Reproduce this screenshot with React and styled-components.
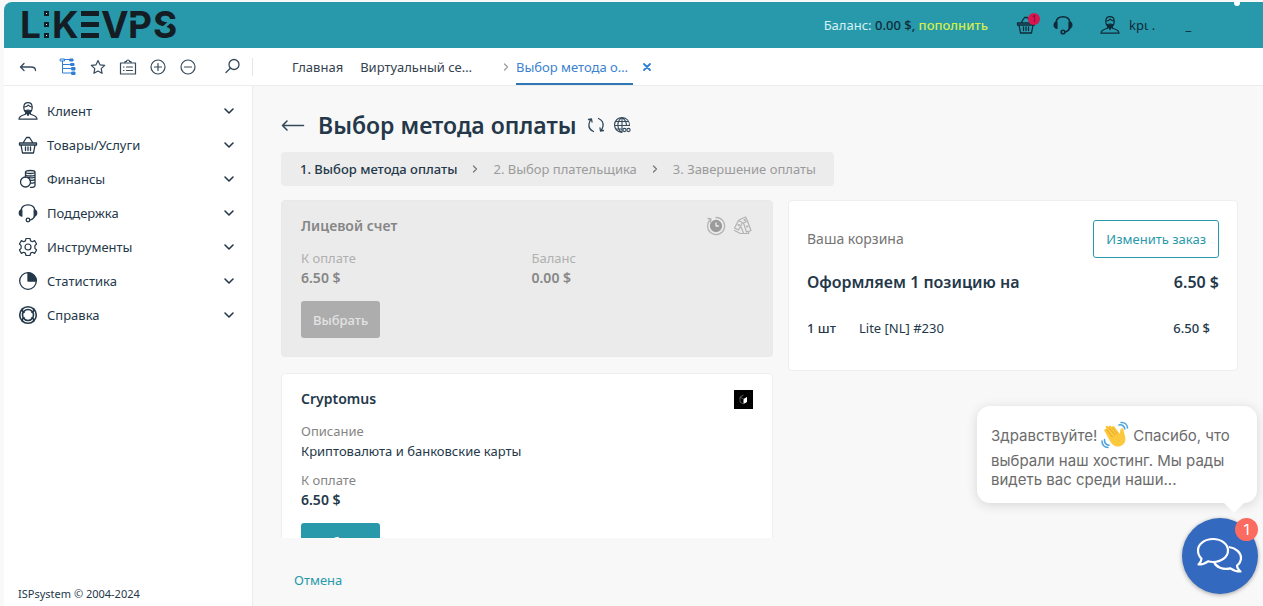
import React from "react";
import styled, { createGlobalStyle } from "styled-components";

const GlobalStyle = createGlobalStyle`
  * { box-sizing: border-box; }
  html, body { margin: 0; padding: 0; }
  body {
    background: #f8f8f8;
    color: #24384a;
    font-family: "Noto Sans", "Open Sans", sans-serif;
    font-size: 13px;
    line-height: 20px;
  }
  button { font: inherit; cursor: pointer; }
  a { text-decoration: none; }
  ul, ol, dl, dd, h1, h2, p { margin: 0; padding: 0; }
  ul, ol { list-style: none; }
`;

const teal = "#2899ab";

const Page = styled.div`
  position: relative;
  display: flex;
  flex-direction: column;
  height: 100vh;
  min-height: 560px;
  padding: 2px 0 0 4px;
  overflow: hidden;
`;

const Header = styled.header`
  flex: none;
  display: flex;
  align-items: center;
  height: 46px;
  padding: 0 73px 0 17px;
  background: ${teal};
  border-top-left-radius: 8px;
`;

const Logo = styled.a`
  display: flex;
  margin-right: auto;
  color: #151d24;
`;

const Balance = styled.p`
  margin-right: 28px;
  color: #d5f1f5;
`;

const BalanceSum = styled.strong`
  color: #0f2a38;
  font-weight: 500;
`;

const TopUp = styled.a`
  color: #d3ee4c;
  font-weight: 500;
`;

const HeaderButton = styled.button`
  position: relative;
  display: flex;
  align-items: center;
  gap: 9px;
  margin-right: ${(p) => p.$gap || 0}px;
  padding: 0;
  border: 0;
  background: none;
  color: #0f2a38;
`;

const CartCount = styled.span`
  position: absolute;
  top: -2px;
  right: -4px;
  width: 12px;
  height: 12px;
  border-radius: 50%;
  background: #d8164f;
  color: #6d0d2d;
  font-size: 9px;
  line-height: 12px;
  text-align: center;
`;

const UserName = styled.span`
  width: 61px;
  text-align: left;
  white-space: pre;
`;

const WindowMark = styled.span`
  position: absolute;
  top: 0;
  right: 23px;
  width: 6px;
  height: 6px;
  border-radius: 0 0 3px 3px;
  background: #fff;
`;

const Bar = styled.div`
  flex: none;
  display: flex;
  align-items: center;
  height: 38px;
  background: #fff;
  border-bottom: 1px solid #ececec;
`;

const Tools = styled.div`
  flex: none;
  display: flex;
  align-items: center;
  gap: 12px;
  width: 249px;
  height: 18px;
  padding: 0 11px 0 15px;
  border-right: 1px solid #e6e6e6;
`;

const IconButton = styled.button`
  display: flex;
  padding: 0;
  border: 0;
  background: none;
  color: ${(p) => (p.$active ? "#2f7fd6" : "#34495a")};
  margin-right: ${(p) => (p.$wide ? 10 : 0)}px;
  margin-left: ${(p) => (p.$last ? "auto" : 0)};
`;

const Tabs = styled.nav`
  display: flex;
  align-items: center;
  align-self: stretch;
  padding-left: 39px;
`;

const Tab = styled.a`
  display: flex;
  align-items: center;
  align-self: stretch;
  margin-right: ${(p) => p.$gap}px;
  padding-right: ${(p) => (p.$active ? 5 : 0)}px;
  border-bottom: 2px solid ${(p) => (p.$active ? "#2f76b5" : "transparent")};
  border-top: 2px solid transparent;
  color: ${(p) => (p.$active ? "#3b82cf" : "#34424f")};
`;

const TabArrow = styled.span`
  display: flex;
  margin-right: 6px;
  color: #9a9a9a;
`;

const Body = styled.div`
  flex: 1;
  display: flex;
  min-height: 0;
`;

const Sidebar = styled.aside`
  flex: none;
  display: flex;
  flex-direction: column;
  width: 249px;
  padding: 8px 14px 0 14px;
  background: #fff;
  border-right: 1px solid #ececec;
`;

const MenuButton = styled.button`
  display: flex;
  align-items: center;
  gap: 9px;
  width: 100%;
  height: 34px;
  padding: 0 3px 0 0;
  border: 0;
  background: none;
  color: #24384a;
  text-align: left;
`;

const MenuLabel = styled.span`
  flex: 1;
`;

const Copyright = styled.p`
  margin-top: auto;
  padding-bottom: 3px;
  font-size: 11px;
  line-height: 18px;
`;

const Main = styled.main`
  flex: 1;
  display: flex;
  flex-direction: column;
  min-width: 0;
  padding: 0 25px 0 28px;
`;

const TitleRow = styled.div`
  display: flex;
  align-items: center;
  gap: 8px;
  height: 66px;
  padding-top: 12px;
  color: #24384a;
`;

const Title = styled.h1`
  margin: 0 2px 0 5px;
  font-size: 23px;
  font-weight: 600;
  line-height: 32px;
`;

const Steps = styled.ol`
  flex: none;
  display: flex;
  align-items: center;
  align-self: flex-start;
  gap: 14px;
  height: 34px;
  padding: 0 18px 0 19px;
  border-radius: 4px;
  background: #ececec;
`;

const Step = styled.li`
  display: flex;
  align-items: center;
  gap: 14px;
  color: ${(p) => (p.$current ? "#24384a" : "#9b9b9b")};
  font-weight: ${(p) => (p.$current ? 500 : 400)};

  svg { color: #777; }
`;

const Scroll = styled.div`
  flex: 1;
  display: grid;
  grid-template-columns: 492fr 450fr;
  align-items: start;
  gap: 15px;
  min-height: 0;
  margin-top: 14px;
  overflow: hidden;
`;

const Methods = styled.div`
  display: flex;
  flex-direction: column;
  gap: 16px;
`;

const Card = styled.section`
  padding: 15px 19px 18px;
  border: 1px solid ${(p) => (p.$disabled ? "#e9e9e9" : "#eeeeee")};
  border-radius: 4px;
  background: ${(p) => (p.$disabled ? "#ebebeb" : "#fff")};
  color: ${(p) => (p.$disabled ? "#868686" : "#24384a")};
`;

const CardHead = styled.div`
  display: flex;
  align-items: center;
  justify-content: space-between;
  height: 20px;
  margin-bottom: 12px;
`;

const CardTitle = styled.h2`
  font-size: 14px;
  font-weight: 600;
  line-height: 20px;
`;

const CardIcons = styled.span`
  display: flex;
  gap: 7px;
  color: #b3b3b3;
`;

const Fields = styled.dl`
  display: grid;
  grid-template-columns: ${(p) => (p.$two ? "1fr 1fr" : "1fr")};
  gap: 9px;
  margin-bottom: 13px;
`;

const FieldName = styled.dt`
  color: ${(p) => (p.$disabled ? "#b0b0b0" : "#858585")};
`;

const FieldValue = styled.dd`
  font-size: ${(p) => (p.$sum ? 14 : 13)}px;
  font-weight: ${(p) => (p.$sum ? 600 : 400)};
`;

const SelectButton = styled.button`
  height: 37px;
  padding: 0 12px;
  border: 0;
  border-radius: 3px;
  background: ${teal};
  color: #fff;
  font-weight: 500;

  &:disabled {
    background: #adadad;
    color: #e3e3e3;
    cursor: default;
  }
`;

const Cart = styled.section`
  min-height: 171px;
  padding: 19px 18px 20px 18px;
  border: 1px solid #eeeeee;
  border-radius: 4px;
  background: #fff;
`;

const CartRow = styled.div`
  display: flex;
  align-items: center;
  justify-content: space-between;
`;

const CartName = styled.h2`
  color: #757575;
  font-size: 14px;
  font-weight: 400;
`;

const ChangeButton = styled.button`
  height: 38px;
  padding: 0 12px;
  border: 1px solid ${teal};
  border-radius: 3px;
  background: #fff;
  color: ${teal};
`;

const CartTotal = styled(CartRow)`
  margin: 12px 0 22px;
  font-size: 16px;
  font-weight: 600;
  line-height: 24px;
`;

const Items = styled.table`
  width: 100%;
  border-collapse: collapse;

  td { padding: 0; height: 24px; }
  td:first-child { width: 52px; font-weight: 500; }
  td:last-child { padding-right: 9px; text-align: right; font-weight: 500; }
`;

const Footer = styled.footer`
  flex: none;
  height: 68px;
  padding: 32px 13px 0;
`;

const Cancel = styled.a`
  color: ${teal};
`;

const Bubble = styled.div`
  position: absolute;
  right: 6px;
  bottom: 103px;
  width: 280px;
  padding: 13px 0 14px 14px;
  border-radius: 13px;
  background: #fff;
  box-shadow: 0 2px 12px rgba(0, 0, 0, 0.14);
  color: #6b6b6b;
  font-family: Inter, "Noto Sans", sans-serif;
  font-size: 15px;
  line-height: 19px;

  &::after {
    content: "";
    position: absolute;
    right: 12px;
    bottom: -10px;
    border: 11px solid transparent;
    border-top-color: #fff;
    border-bottom: 0;
  }
`;

const BubbleLine = styled.p`
  display: flex;
  align-items: center;
  gap: 4px;
  min-height: ${(p) => (p.$tall ? 32 : 19)}px;
`;

const ChatButton = styled.button`
  position: absolute;
  right: 5px;
  bottom: 12px;
  display: flex;
  align-items: center;
  justify-content: center;
  width: 76px;
  height: 76px;
  padding: 0;
  border: 0;
  border-radius: 50%;
  background: #3369bf;
  box-shadow: 0 1px 4px rgba(0, 0, 0, 0.35);
  color: #fff;
`;

const ChatCount = styled.span`
  position: absolute;
  top: 0;
  right: 0;
  width: 23px;
  height: 23px;
  border-radius: 50%;
  background: #fb6b60;
  color: #fff;
  font-family: Inter, sans-serif;
  font-size: 15px;
  line-height: 23px;
`;

const Svg = ({ size = 20, box = 20, children, width = 1.3 }) => (
  <svg
    width={size}
    height={size}
    viewBox={`0 0 ${box} ${box}`}
    fill="none"
    stroke="currentColor"
    strokeWidth={width}
    strokeLinecap="round"
    strokeLinejoin="round"
    aria-hidden="true"
  >
    {children}
  </svg>
);

const UserIcon = () => (
  <Svg width={1.2}>
    <path d="M5.800 6.500C5.800 3.500 7.300 1.700 10 1.700s4.200 1.800 4.200 4.800c0 3-1.800 5.700-4.200 5.700s-4.200-2.700-4.200-5.700z" />
    <path d="M6.200 6c2 0 3.300-.8 4-1.800.8 1 2 1.600 3.600 1.800M7.500 11.800v1.500c-3 1-6.500 1.400-6.500 4.900h18c0-3.500-3.500-3.900-6.500-4.900v-1.500" />
    <path d="M7 9.800 10 14.500l3-4.700c-1.500-.8-4.500-.8-6 0z" fill="currentColor" />
  </Svg>
);

const BasketIcon = () => (
  <Svg>
    <path d="M1.500 8h17v2h-17zM3 10l1.500 8h11L17 10M5 8l3.500-5.500h3L15 8M7.500 12v3.500M10 12v3.500M12.500 12v3.500" />
  </Svg>
);

const CoinsIcon = () => (
  <Svg>
    <circle cx="7.500" cy="13" r="5" />
    <path d="M7.500 8V3c0-2 9.500-2 9.500 0v13.500c0 1.300-2 1.900-4.500 1.900M7.500 3c0 2 9.500 2 9.500 0M7.500 5.500c0 2 9.500 2 9.500 0M9.500 8.400c3 .8 7.500.5 7.500-.8M12 11.300c2.500.2 5-.2 5-1.300M12.500 14.200c2.500.1 4.500-.4 4.500-1.400" />
  </Svg>
);

const HeadsetIcon = ({ width = 1.3 }) => (
  <Svg width={width}>
    <path d="M3 7.500C3.500 4 6.300 1.800 10 1.800S16.500 4 17 7.500M17 12.500c-.8 2.300-2.400 3.800-4.800 4.500" />
    <path d="M3.800 7v6.200C2.200 12.900 1.300 11.700 1.300 10.100S2.200 7.300 3.800 7zM16.200 7v6.200c1.600-.3 2.500-1.500 2.500-3.100s-.9-2.800-2.500-3.100z" fill="currentColor" />
    <circle cx="10" cy="17" r="1.800" />
  </Svg>
);

const GearIcon = () => (
  <Svg width={1.200}>
    <path d="M8 1.500h4l.6 2.400 1.700.8 2.300-1.100 2 3.400-1.700 1.700v2.600l1.700 1.700-2 3.400-2.300-1.100-1.700.8-.6 2.400H8l-.6-2.400-1.700-.8-2.300 1.100-2-3.400 1.700-1.700V8.700L1.400 7l2-3.400 2.300 1.100 1.700-.8z" />
    <circle cx="10" cy="10" r="3" />
  </Svg>
);

const PieIcon = () => (
  <Svg>
    <circle cx="10" cy="10" r="8.300" />
    <path d="M10 1.700V10h8.300A8.300 8.300 0 0 0 10 1.700z" fill="currentColor" />
  </Svg>
);

const HelpIcon = () => (
  <Svg width={1.600}>
    <circle cx="10" cy="10" r="8.300" />
    <circle cx="10" cy="10" r="5.500" />
    <path d="M4.600 3.600c-1 2 .1 3.200 1.400 3.700M15.400 3.600c1 2-.1 3.200-1.400 3.700M4.600 16.400c-1-2 .1-3.200 1.400-3.700M15.400 16.400c1-2-.1-3.200-1.400-3.700" />
  </Svg>
);

const ChevronDown = () => (
  <Svg size={12} box={12} width={1.600}>
    <path d="M2 4l4 4 4-4" />
  </Svg>
);

const ChevronRight = () => (
  <Svg size={8} box={8} width={1.200}>
    <path d="M2.500 1 5.500 4 2.500 7" />
  </Svg>
);

const LogoMark = () => (
  <svg width="162" height="46" viewBox="0 0 162 46" aria-hidden="true">
    <g fill="currentColor" fontFamily="Inter, sans-serif" fontWeight="700" fontSize="37">
      <text x="-1" y="36">L</text>
      <text x="31" y="36">K</text>
      <text x="80" y="36">V</text>
      <text x="107" y="36">P</text>
      <text x="132" y="36">S</text>
      <rect x="60" y="9" width="18" height="5" />
      <rect x="60" y="20" width="18" height="5" />
      <rect x="60" y="31" width="18" height="5" />
    </g>
    <g fill="#d5f1f5" stroke="currentColor" strokeWidth="2">
      <rect x="24" y="10" width="3" height="3" />
      <rect x="24" y="21" width="3" height="3" />
      <rect x="24" y="32" width="3" height="3" />
    </g>
    <path d="M108 17h8M141 27l10-9" stroke={teal} strokeWidth="3" fill="none" />
  </svg>
);

const WaveHand = () => (
  <svg width="28" height="28" viewBox="0 0 28 28" aria-hidden="true">
    <path d="M3.500 10c-1-1.500 1-2.800 2-1.500L4.800 6.800c-.8-1.600 1.300-2.800 2.300-1.300l.8 1c-.7-1.500 1.300-2.700 2.300-1.300l1 1.300c-.3-1.300 1.500-2 2.300-.8l5.300 7c.4-1.800.2-3.200 1-4.700.8-1.300 2.800-.7 2.800 1 0 3 2.500 6.500 1.700 10.500-.8 4.300-5.300 7-9.500 5.700-2.700-.8-4-2.500-5.300-4.300z" fill="#fcc93e" />
    <path d="M5.500 8.500l6 7.500M7.900 6.500l6 7.500M11.200 6.500l5 6.500" stroke="#e8a62b" strokeWidth="1" fill="none" strokeLinecap="round" />
    <path d="M18 4c2.500-1 5.500 1 5.800 4M20 1.500c3.500-.5 6.500 2 6.500 5.500M3.500 18.500c-.3 3 1.500 5.500 4.500 5.700M1 20c0 4 2.500 6.500 6 6.500" stroke="#4da3dd" strokeWidth="1.600" fill="none" strokeLinecap="round" />
  </svg>
);

const menu = [
  ["Клиент", UserIcon],
  ["Товары/Услуги", BasketIcon],
  ["Финансы", CoinsIcon],
  ["Поддержка", HeadsetIcon],
  ["Инструменты", GearIcon],
  ["Статистика", PieIcon],
  ["Справка", HelpIcon],
];

const steps = ["1. Выбор метода оплаты", "2. Выбор плательщика", "3. Завершение оплаты"];

function TopBar() {
  return (
    <Header>
      <Logo href="#" aria-label="LIKEVPS"><LogoMark /></Logo>
      <Balance>
        Баланс: <BalanceSum>0.00 $,</BalanceSum> <TopUp href="#">пополнить</TopUp>
      </Balance>
      <HeaderButton $gap={17} aria-label="Корзина">
        <BasketIcon />
        <CartCount>1</CartCount>
      </HeaderButton>
      <HeaderButton $gap={27} aria-label="Поддержка"><HeadsetIcon width={1.600} /></HeaderButton>
      <HeaderButton>
        <UserIcon />
        <UserName>kpι .{"         "}_</UserName>
      </HeaderButton>
    </Header>
  );
}

function Toolbar() {
  return (
    <Bar>
      <Tools>
        <IconButton $wide aria-label="Назад">
          <Svg size={18} box={18}><path d="M5 5.500 1.500 9 5 12.500M1.500 9H12c3 0 4.500 1 4.500 3.500" /></Svg>
        </IconButton>
        <IconButton $active aria-label="Дерево">
          <Svg size={18} box={18} width={1}>
            <path d="M5 1.500h6M3.500 3v12H12M3.500 6.500H12M3.500 10.500H12" />
            <path d="M1.500 1h4v2h-4z" />
            <path d="M11 1h3v2h-3zM12 5.500h3v2h-3zM13 9.500h3v2.500h-3zM13 14h3v2.500h-3z" fill="currentColor" />
          </Svg>
        </IconButton>
        <IconButton aria-label="Избранное">
          <Svg size={18} box={18} width={1.200}><path d="m9 2.500 2 4.300 4.700.6-3.500 3.200.9 4.700L9 13l-4.100 2.300.9-4.700-3.500-3.200 4.700-.6z" /></Svg>
        </IconButton>
        <IconButton aria-label="Список">
          <Svg size={18} box={18} width={1.200}>
            <path d="M1.500 5h15v11h-15zM6 5V3.500h1.500c0-2 3-2 3 0H12V5M4.500 9H5M7.500 9h6M4.500 12.500H5M7.500 12.500h6" />
          </Svg>
        </IconButton>
        <IconButton aria-label="Развернуть">
          <Svg size={18} box={18} width={1.200}><circle cx="9" cy="9" r="7" /><path d="M5.500 9h7M9 5.500v7" /></Svg>
        </IconButton>
        <IconButton aria-label="Свернуть">
          <Svg size={18} box={18} width={1.200}><circle cx="9" cy="9" r="7" /><path d="M5.500 9h7" /></Svg>
        </IconButton>
        <IconButton $last aria-label="Поиск">
          <Svg size={18} box={18} width={1.300}><circle cx="11" cy="6.500" r="5" /><path d="M7.500 10 3 14.500" /></Svg>
        </IconButton>
      </Tools>
      <Tabs>
        <Tab href="#" $gap={17}>Главная</Tab>
        <Tab href="#" $gap={30}>Виртуальный се…</Tab>
        <TabArrow><ChevronRight /></TabArrow>
        <Tab href="#" $active $gap={9}>Выбор метода о…</Tab>
        <IconButton $active aria-label="Закрыть вкладку">
          <Svg size={10} box={10} width={1.800}><path d="m2 2 6 6M8 2 2 8" /></Svg>
        </IconButton>
      </Tabs>
    </Bar>
  );
}

export default function App() {
  return (
    <Page>
      <GlobalStyle />
      <TopBar />
      <WindowMark />
      <Toolbar />
      <Body>
        <Sidebar>
          <ul>
            {menu.map(([label, Icon]) => (
              <li key={label}>
                <MenuButton>
                  <Icon />
                  <MenuLabel>{label}</MenuLabel>
                  <ChevronDown />
                </MenuButton>
              </li>
            ))}
          </ul>
          <Copyright>ISPsystem © 2004-2024</Copyright>
        </Sidebar>
        <Main>
          <TitleRow>
            <IconButton aria-label="Назад">
              <Svg size={24} box={24} width={1.600}><path d="M6 8 1.500 12.500 6 17M1.500 12.500h21" /></Svg>
            </IconButton>
            <Title>Выбор метода оплаты</Title>
            <IconButton aria-label="Обновить">
              <Svg size={18} box={18}>
                <path d="M6.500 15.500C3 14 1.500 11.500 2 8c.3-2 1-3.500 2-4.700M1.500 3.500 4.500 3l.5 3M11.500 2.500C15 4 16.500 6.500 16 10c-.3 2-1 3.500-2 4.700M16.500 14.500l-3 .5-.5-3" />
              </Svg>
            </IconButton>
            <IconButton aria-label="Язык">
              <Svg size={18} box={18} width={1.100}>
                <path d="M16.500 9.500A7.500 7.500 0 1 0 9 16.500M9 1.500v15M9 1.500C3.500 5 3.500 13 9 16.500M9 1.500c3 2 4.500 4.500 4.500 8M2.500 5.500h13M1.500 9.500h15M2.500 13H8" />
                <circle cx="11.500" cy="14" r="1.600" />
                <circle cx="15.500" cy="14" r="1.600" />
              </Svg>
            </IconButton>
          </TitleRow>
          <Steps>
            {steps.map((step, i) => (
              <Step key={step} $current={i === 0}>
                {step}
                {i < 2 && <ChevronRight />}
              </Step>
            ))}
          </Steps>
          <Scroll>
            <Methods>
              <Card $disabled>
                <CardHead>
                  <CardTitle>Лицевой счет</CardTitle>
                  <CardIcons>
                    <Svg>
                      <path d="M5 3.200A8.500 8.500 0 1 0 10 1.500M2 2.500l3 .5-.5 3" />
                      <circle cx="10" cy="10" r="5.500" fill="#9b9b9b" stroke="#9b9b9b" />
                      <path d="M10 7v3h2.500" stroke="#ebebeb" />
                    </Svg>
                    <Svg width={1.200}>
                      <path d="m1.500 12 4-7.500 4 2-4 7.500zM6 4l6.500-3 2 4-4 2M10.500 7l4-2 3.500 9.500-4.500 1.500zM1.500 14.500l6 3h8l.5-2M8 11l2.500 6" />
                      <path d="M5.500 9h.5M11.500 4h.5M14 10.500h.5" strokeWidth="2" />
                    </Svg>
                  </CardIcons>
                </CardHead>
                <Fields $two>
                  <div>
                    <FieldName $disabled>К оплате</FieldName>
                    <FieldValue $sum>6.50 $</FieldValue>
                  </div>
                  <div>
                    <FieldName $disabled>Баланс</FieldName>
                    <FieldValue $sum>0.00 $</FieldValue>
                  </div>
                </Fields>
                <SelectButton disabled>Выбрать</SelectButton>
              </Card>
              <Card>
                <CardHead>
                  <CardTitle>Cryptomus</CardTitle>
                  <svg width="19" height="19" viewBox="0 0 19 19" aria-hidden="true">
                    <rect width="19" height="19" fill="#000" />
                    <path d="M9.500 9v5l3.500-2V7z" fill="#fff" />
                    <path d="M9.500 5 6 7v5l3.500 2M6 7l3.500 2" stroke="#555" fill="none" />
                  </svg>
                </CardHead>
                <Fields>
                  <div>
                    <FieldName>Описание</FieldName>
                    <FieldValue>Криптовалюта и банковские карты</FieldValue>
                  </div>
                  <div>
                    <FieldName>К оплате</FieldName>
                    <FieldValue $sum>6.50 $</FieldValue>
                  </div>
                </Fields>
                <SelectButton>Выбрать</SelectButton>
              </Card>
            </Methods>
            <Cart>
              <CartRow>
                <CartName>Ваша корзина</CartName>
                <ChangeButton>Изменить заказ</ChangeButton>
              </CartRow>
              <CartTotal>
                <span>Оформляем 1 позицию на</span>
                <span>6.50 $</span>
              </CartTotal>
              <Items>
                <tbody>
                  <tr>
                    <td>1 шт</td>
                    <td>Lite [NL] #230</td>
                    <td>6.50 $</td>
                  </tr>
                </tbody>
              </Items>
            </Cart>
          </Scroll>
          <Footer>
            <Cancel href="#">Отмена</Cancel>
          </Footer>
        </Main>
      </Body>
      <Bubble>
        <BubbleLine $tall>Здравствуйте! <WaveHand /> Спасибо, что</BubbleLine>
        <BubbleLine>выбрали наш хостинг. Мы рады</BubbleLine>
        <BubbleLine>видеть вас среди наши...</BubbleLine>
      </Bubble>
      <ChatButton aria-label="Открыть чат">
        <svg width="48" height="40" viewBox="0 0 48 40" fill="none" stroke="#fff" strokeWidth="2.200" strokeLinejoin="round" aria-hidden="true">
          <path d="M17 3c8.500 0 15 5 15 11.500S25.500 26 17 26c-1.800 0-3.400-.2-5-.7-2.500 2-6 3.200-9.500 3.200 2-1.800 3-4 3-6C3.200 20.500 2 17.700 2 14.500 2 8 8.500 3 17 3z" />
          <path d="M33 11c7 1 12 5.500 12 11 0 3-1.500 5.500-4 7.500 0 2 1 4 3.500 6-4 0-7.500-1.300-10-3.200-8 1.700-14.500-1.300-16.500-6.300" />
        </svg>
        <ChatCount>1</ChatCount>
      </ChatButton>
    </Page>
  );
}
